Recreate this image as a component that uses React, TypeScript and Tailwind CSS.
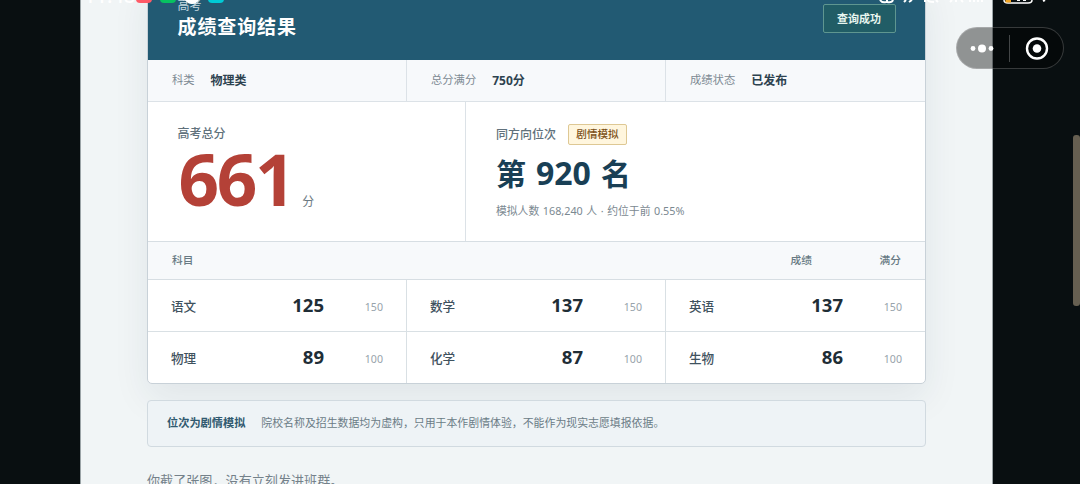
import React from 'react'

type Subject = { name: string; score: number; full: number }

const subjects: Subject[] = [
  { name: '语文', score: 125, full: 150 },
  { name: '数学', score: 137, full: 150 },
  { name: '英语', score: 137, full: 150 },
  { name: '物理', score: 89, full: 100 },
  { name: '化学', score: 87, full: 100 },
  { name: '生物', score: 86, full: 100 },
]

const meta = [
  { label: '科类', value: '物理类' },
  { label: '总分满分', value: '750分' },
  { label: '成绩状态', value: '已发布' },
]

// System status bar, scrolled mostly out of view
function StatusBar() {
  return (
    <div className="absolute inset-x-0 top-0 h-[6px] overflow-hidden">
      <div className="absolute left-[84px] -top-[14px] text-[20px] leading-[20px] font-medium text-white">11:48</div>
      <div className="absolute left-[136px] -top-[13px] flex gap-2">
        <span className="h-4 w-4 rounded bg-[#ff5a67]" />
        <span className="h-4 w-4 rounded bg-[#07c160]" />
        <span className="h-[17px] w-4 rounded-full border-[5px] border-white bg-[#3f66b5]" />
        <span className="h-4 w-4 rounded bg-[#00cbd6]" />
      </div>
      <svg className="absolute left-[870px] top-0" width="180" height="6" fill="none" stroke="#fff" strokeWidth="2">
        <path d="M10 0q2 3 6 2M17 0v2q5 1 6-2M36 0l-2 2M42 0l-3 2M55 0v2M58 0q0 2 6 2M66 0l2 2M82 0l-2 2M86 0v2M91 0l2 2M100 0v2M104 0v2M108 0v2M112 0v2" />
        <path d="M134 0q0 3 4 3h20q4 0 4-3" strokeWidth="1.5" />
        <path d="M137 0v1h4" stroke="#f5a623" strokeWidth="3" />
        <path d="M147 0h3M153 0h3M175 0l-2 1" />
      </svg>
    </div>
  )
}

function Capsule() {
  return (
    <div className="absolute left-[956px] top-[27px] flex h-[42px] w-[108px] items-center rounded-full border border-white/20 bg-black/40">
      <svg width="106" height="40" fill="#fff">
        <circle cx="16" cy="20.5" r="2.4" />
        <circle cx="25" cy="20.5" r="4" />
        <circle cx="34" cy="20.5" r="2.4" />
        <path d="M52.5 7v27" stroke="#fff" strokeOpacity=".25" />
        <circle cx="80" cy="20.5" r="10" fill="none" stroke="#fff" strokeWidth="2.4" />
        <circle cx="80" cy="20.5" r="4.3" />
      </svg>
    </div>
  )
}

function ScoreCard() {
  return (
    <section className="-mt-5 h-[404px] overflow-hidden rounded-[5px] border border-[#c8d1d8] bg-white shadow-[0_14px_36px_rgba(30,55,75,0.08)]">
      <header className="flex h-[79px] items-start justify-between bg-[#225a73] pl-[29.5px] pr-[29.5px] text-white">
        <div className="pt-[15px]">
          <div className="text-[12px] leading-[20px] text-[#c5d8e0]">高考</div>
          <h1 className="mt-[-1px] text-[19px] leading-[24px] font-bold tracking-[0.9px]">成绩查询结果</h1>
        </div>
        <span className="mt-[23px] flex h-[29px] w-[73px] items-center justify-center rounded-[2px] border border-[#5f9690] bg-[#215d66] pt-px text-[11px] font-bold text-[#e8f6ef]">
          查询成功
        </span>
      </header>

      <div className="grid h-[42px] grid-cols-3 border-b border-[#dce2e7] bg-[#f7f9fb]">
        {meta.map((m) => (
          <div key={m.label} className="flex gap-4 border-r border-[#dce2e7] pl-6 last:border-r-0">
            <span className="text-[11.3px] leading-[40px] text-[#7d8a93]">{m.label}</span>
            <span className="text-[12px] leading-[42px] font-bold text-[#2d424f]">{m.value}</span>
          </div>
        ))}
      </div>

      <div className="flex h-[140px] border-b border-[#d7dee3]">
        <div className="w-[318px] border-r border-[#dce2e7] pl-[29.5px] pt-[22px]">
          <div className="text-[12px] leading-[20px] font-medium text-[#60717c]">高考总分</div>
          <div className="-mt-px flex items-baseline">
            <strong className="ml-px text-[71px] leading-[72px] font-bold tracking-[-2.4px] text-[#b44137]">661</strong>
            <span className="ml-[9px] text-[12px] text-[#6b7981]">分</span>
          </div>
        </div>
        <div className="flex-1 pl-[30px] pt-[22px]">
          <div className="flex items-center gap-3">
            <span className="text-[12px] leading-[20px] font-medium text-[#60717c]">同方向位次</span>
            <span className="flex h-[21px] w-[59px] items-center justify-center rounded-[2px] border border-[#dec894] bg-[#fff6de] text-[10.6px] font-medium text-[#7c5118]">
              剧情模拟
            </span>
          </div>
          <div className="mt-[6px] text-[30px] leading-[44px] font-bold [word-spacing:2.2px] text-[#193f55]">
            第 <span className="text-[32px]">920</span> 名
          </div>
          <div className="mt-[5px] text-[10.8px] leading-[20px] [word-spacing:0.8px] text-[#7b8991]">模拟人数 168,240 人 · 约位于前 0.55%</div>
        </div>
      </div>

      <div className="flex h-[38px] items-center border-b border-[#d7dee3] bg-[#f7f9fb] pl-6 pr-6 text-[10.7px] font-medium text-[#677983]">
        <span className="flex-1">科目</span>
        <span>成绩</span>
        <span className="w-[89px] text-right">满分</span>
      </div>

      <div className="grid grid-cols-3">
        {subjects.map((s) => (
          <div
            key={s.name}
            className="flex h-[52px] items-center border-r border-b border-[#d9e0e4] pl-[23px] pr-[23px] nth-[3n]:border-r-0"
          >
            <span className="flex-1 pt-[3px] text-[12.6px] font-medium text-[#3f525e]">{s.name}</span>
            <strong className="pb-[2px] text-[18.5px] font-bold text-[#202d36]">{s.score}</strong>
            <span className="w-[59px] pt-[4px] text-right text-[10.6px] text-[#98a3ab]">{s.full}</span>
          </div>
        ))}
      </div>
    </section>
  )
}

export default function App() {
  return (
    <div className="relative h-[484px] w-[1080px] overflow-hidden bg-[#090f11] font-['Noto_Sans','Noto_Sans_CJK_SC',sans-serif]">
      <main className="ml-[80px] h-[484px] w-[913px] overflow-hidden border-x border-[#9ba4a7] bg-[#f1f5f6] pl-[66px] pr-[66px]">
        <ScoreCard />
        <div className="mt-[16px] flex h-[47px] items-center gap-4 rounded-[4px] border border-[#d1dae0] bg-[#eef3f6] pl-[19px]">
          <b className="text-[11.2px] text-[#315a70]">位次为剧情模拟</b>
          <span className="text-[10.9px] text-[#6b7c86]">院校名称及招生数据均为虚构，只用于本作剧情体验，不能作为现实志愿填报依据。</span>
        </div>
        <p className="mt-[24px] text-[13.1px] leading-[20px] text-[#74818a]">你截了张图，没有立刻发进班群。</p>
      </main>
      <StatusBar />
      <Capsule />
      <div className="absolute left-[1073px] top-[135px] h-[171px] w-[7px] rounded-[3px] bg-[#665f51]" />
    </div>
  )
}
